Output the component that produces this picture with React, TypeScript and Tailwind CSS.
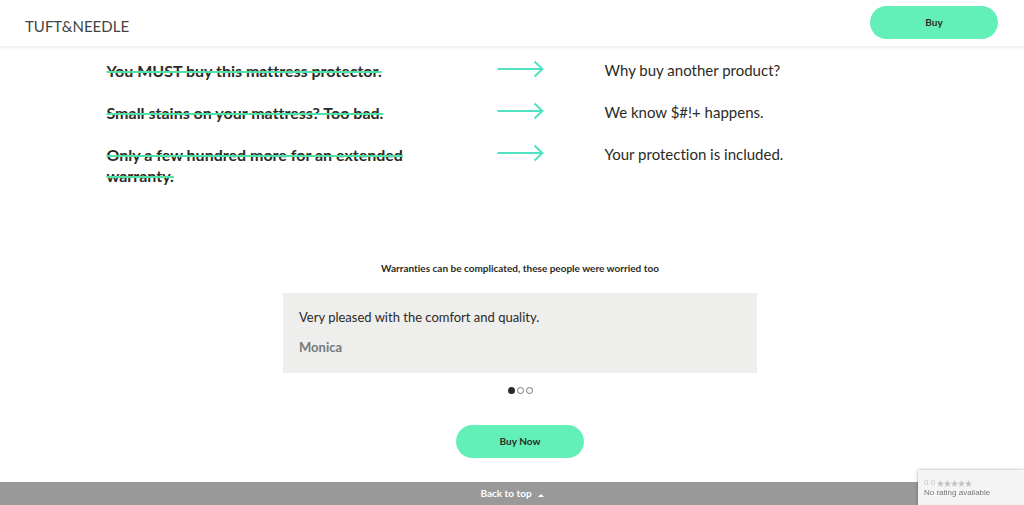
const comparisons = [
  { claim: "You MUST buy this mattress protector.", answer: "Why buy another product?" },
  { claim: "Small stains on your mattress? Too bad.", answer: "We know $#!+ happens." },
  { claim: "Only a few hundred more for an extended warranty.", answer: "Your protection is included." },
];

function Arrow() {
  return (
    <svg className="h-5 w-12" viewBox="0 0 48 20" fill="none" stroke="#50e3c2" strokeWidth="2" aria-hidden="true">
      <path d="M0.500 9H45.500M37.500 1.500l8 7.500l-8 7.500" />
    </svg>
  );
}

function Star() {
  return (
    <svg className="size-[7px]" viewBox="0 0 24 24" fill="#c4c4c4" aria-hidden="true">
      <path d="M12 0l3.500 8.200L24 9l-6.400 5.800L19.500 23.500L12 19l-7.500 4.500L6.400 14.800L0 9l8.500-.8z" />
    </svg>
  );
}

function BuyButton({ label }: { label: string }) {
  return (
    <button type="button" className="h-[33px] w-32 rounded-full bg-[#63efb8] text-[10px] font-bold text-[#2b2b26]">
      {label}
    </button>
  );
}

export default function App() {
  return (
    <div className="flex min-h-screen flex-col bg-white font-['Lato',sans-serif] text-[#2b2b26] [font-variant-ligatures:none]">
      <header className="flex items-start justify-between pt-1.5 pr-[26px] pb-[7px] pl-[25px] shadow-[0_1px_4px_rgba(0,0,0,0.1)]">
        <a href="#" className="mt-2.5 text-[15px] leading-5 text-[#44443f]">
          TUFT&amp;NEEDLE
        </a>
        <BuyButton label="Buy" />
      </header>

      <main className="flex flex-1 flex-col items-center pl-4">
        <ul className="mt-3.5 grid w-full max-w-[827px] gap-[21px]">
          {comparisons.map(({ claim, answer }) => (
            <li key={claim} className="grid grid-cols-[390fr_108fr_329fr] text-[15px] leading-[21px]">
              <p className="pr-[72px] text-[16px] leading-[21px] font-bold">
                <s className="decoration-[#50e3a8] decoration-2">{claim}</s>
              </p>
              <Arrow />
              <p>{answer}</p>
            </li>
          ))}
        </ul>

        <h2 className="mt-[74px] text-[10px] leading-4 font-bold">
          Warranties can be complicated, these people were worried too
        </h2>
        <blockquote className="mt-[17px] w-full max-w-[474px] bg-[#eeeeec] px-4 pt-3.5 pb-4">
          <p className="text-[13px] leading-5">Very pleased with the comfort and quality.</p>
          <footer className="mt-2.5 text-[13px] leading-5 font-bold text-[#737b7b]">Monica</footer>
        </blockquote>

        <div className="mt-3.5 flex gap-0.5">
          <button type="button" aria-label="Review 1" className="size-[7px] rounded-full bg-[#2b2b26]" />
          <button type="button" aria-label="Review 2" className="size-[7px] rounded-full border border-[#777777]" />
          <button type="button" aria-label="Review 3" className="size-[7px] rounded-full border border-[#777777]" />
        </div>

        <div className="mt-[31px] mb-6">
          <BuyButton label="Buy Now" />
        </div>
      </main>

      <a href="#" className="flex h-[23px] items-center justify-center gap-1.5 bg-[#999999] text-[10px] font-bold text-white">
        Back to top
        <svg className="mt-1 h-[3px] w-1.5" viewBox="0 0 6 3" fill="currentColor" aria-hidden="true">
          <path d="M3 0l3 3H0z" />
        </svg>
      </a>

      <aside className="fixed right-0 bottom-0 h-[35px] w-[106px] bg-[#f4f4f4] pt-2 pl-1.5 font-['Liberation_Sans',sans-serif] text-[8px] leading-[10px] text-[#777777] shadow-[0_0_3px_rgba(0,0,0,0.35)]">
        <div className="flex items-center gap-0.5 text-[#c4c4c4]">
          <span>0.0</span>
          <span className="flex">
            <Star />
            <Star />
            <Star />
            <Star />
            <Star />
          </span>
        </div>
        <p>No rating available</p>
      </aside>
    </div>
  );
}
